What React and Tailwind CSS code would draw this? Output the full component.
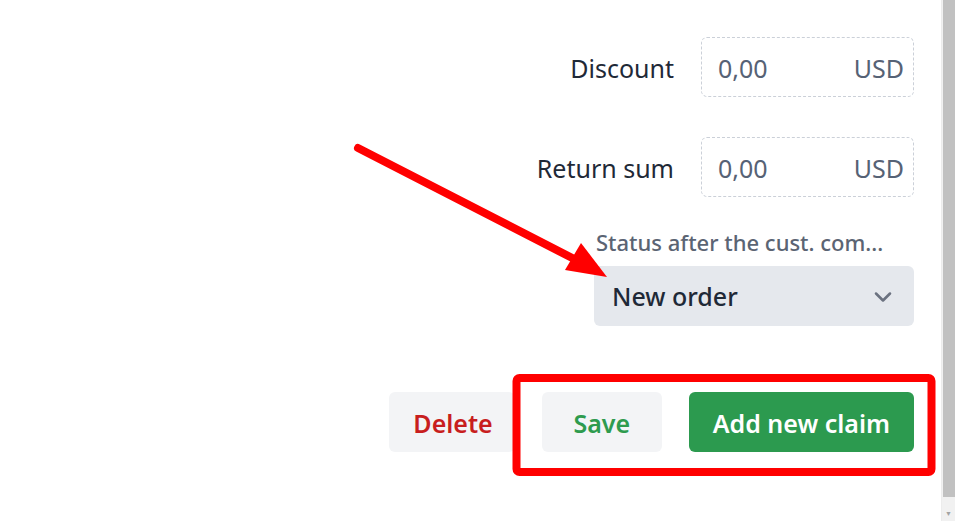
import { ChevronDown } from 'lucide-react';

function MoneyRow({ label, mt }) {
  return (
    <div className={`flex items-center gap-[27px] ${mt}`}>
      <span className="pt-[4px] text-[25px] text-[#1f2937]">{label}</span>
      <div className="flex h-[60px] w-[213px] items-center justify-between rounded-[6px] border border-dashed border-[#cbd0d8] pt-[4px] pl-[16px] pr-[9px] text-[25px] text-[#566275]">
        <span>0,00</span>
        <span>USD</span>
      </div>
    </div>
  );
}

export default function App() {
  return (
    <div className="relative flex h-[521px] w-[955px] overflow-hidden bg-white" style={{ fontFamily: '"Noto Sans", "Open Sans", sans-serif' }}>
      <div className="flex flex-1 flex-col items-end pt-[37px] pr-[27px]">
        <MoneyRow label="Discount" mt="" />
        <MoneyRow label="Return sum" mt="mt-[40px]" />

        <div className="mt-[31px] flex w-[320px] flex-col">
          <span className="pl-[2px] text-[22px] leading-[28px] font-medium text-[#5b6473]">Status after the cust. com...</span>
          <div className="mt-[10px] flex h-[60px] items-center justify-between rounded-[6px] bg-[#e5e8ed] pt-[2px] pl-[18px] pr-[17px]">
            <span className="text-[25px] font-medium text-[#1f2937]">New order</span>
            <ChevronDown size={28} strokeWidth={2.2} className="text-[#6b7280]" />
          </div>
        </div>

        <div className="mt-[66px] flex gap-[27px]">
          <button className="h-[60px] rounded-[6px] bg-[#f3f4f6] pl-[24px] pr-[22px] pt-[3px] text-[25px] font-semibold text-[#c81e1e]">Delete</button>
          <button className="h-[60px] min-w-[120px] rounded-[6px] bg-[#f3f4f6] px-[24px] pt-[3px] text-[25px] font-semibold text-[#2e9b4e]">Save</button>
          <button className="h-[60px] rounded-[6px] bg-[#2c9a4f] px-[24px] pt-[3px] text-[25px] font-semibold text-white">Add new claim</button>
        </div>
      </div>

      <div className="flex w-[14px] flex-col border-l border-[#ececec] bg-[#f1f1f1]">
        <div className="ml-[1px] h-[497px] bg-[#c1c1c1]" />
        <div className="flex flex-1 items-end justify-center pb-[4px] text-[7px] leading-none text-[#a3a3a3]">▼</div>
      </div>

      <svg className="pointer-events-none absolute inset-0" width="955" height="521">
        <line x1="358" y1="148" x2="580" y2="262" stroke="#ff0000" strokeWidth="8" strokeLinecap="round" />
        <polygon points="607,277 565,270 581,243" fill="#ff0000" />
        <rect x="516.5" y="378" width="415" height="94" rx="3" fill="none" stroke="#ff0000" strokeWidth="8" />
      </svg>
    </div>
  );
}
